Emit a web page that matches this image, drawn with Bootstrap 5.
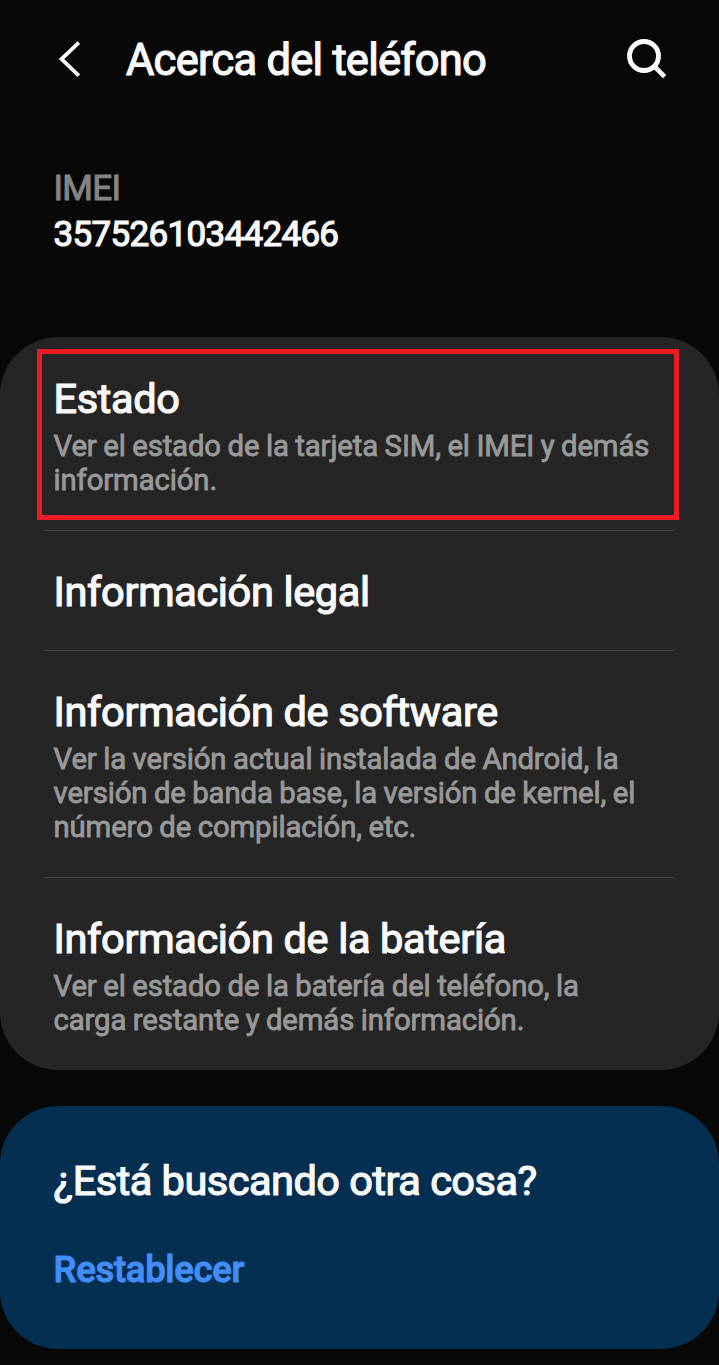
<!DOCTYPE html>
<html lang="es">
<head>
<meta charset="utf-8">
<meta name="viewport" content="width=device-width, initial-scale=1">
<title>Acerca del teléfono</title>
<link rel="stylesheet" href="https://cdn.jsdelivr.net/npm/bootstrap@5.3.0/dist/css/bootstrap.min.css">
<style>
body{background:#080808;color:#fafafa;font-family:Roboto,sans-serif;height:1365px;overflow:hidden}
.topbar{height:120px;padding:0 52px 0 57px}
.topbar h1{font-size:43.5px;line-height:50px;font-weight:400;margin-left:44px;padding-top:2px;-webkit-text-stroke:1.2px;letter-spacing:-.76px}
.imei{height:217px;padding:46px 52.5px 0 53.5px;font-size:35px;line-height:46px;letter-spacing:-.68px}
.imei dt{font-weight:400;color:#858585;-webkit-text-stroke:1px}
.imei dd{-webkit-text-stroke:1.2px}
.panel{border-radius:58px;background:#252525;height:733px;padding:12px 40px 0 37px}
.entry{padding:37px 16px 0 16.5px}
.entry h2,.help h2{font-size:41.5px;line-height:48px;font-weight:400;margin:0;letter-spacing:-.34px;-webkit-text-stroke:1.2px}
.entry p{font-size:29.3px;line-height:34px;color:#999;margin:6px 0 0;letter-spacing:-.11px;word-spacing:-.6px;white-space:nowrap;-webkit-text-stroke:.85px}
.marked{border:5px solid #ed1c24;height:171px;padding:21px 11px 0 11.5px;margin-bottom:10px}
.legal{height:119px}
.software{height:226px}
.rule{height:1px;background:#414141;margin:0 5px 0 7px}
.help{height:243px;margin-top:36px;border-radius:58px;background:#052f51;padding:51px 53px 0 53.5px}
.help h2{letter-spacing:-.5px}
.help a{display:block;margin-top:43px;font-size:36.5px;line-height:44px;letter-spacing:-.3px;color:#438dfb;font-weight:500;-webkit-text-stroke:1px}
</style>
</head>
<body>
<header class="topbar d-flex align-items-center">
<svg width="25" height="40" viewBox="0 0 25 40" fill="none" stroke="#fafafa" stroke-width="3.8"><path d="M21.8 2.6 4.5 19l17.3 16.6"/></svg>
<h1 class="mb-0 text-nowrap">Acerca del teléfono</h1>
<svg class="ms-auto" width="42" height="42" viewBox="0 0 42 42" fill="none" stroke="#fafafa" stroke-width="4.9"><circle cx="19" cy="17" r="14.5"/><path d="m29 27 10.6 10.6" stroke-width="4.6"/></svg>
</header>
<dl class="imei mb-0"><dt>IMEI</dt><dd class="mb-0">357526103442466</dd></dl>
<main>
<section class="panel">
<div class="entry marked"><h2>Estado</h2><p>Ver el estado de la tarjeta SIM, el IMEI y demás<br>información.</p></div>
<div class="rule"></div>
<div class="entry legal"><h2>Información legal</h2></div>
<div class="rule"></div>
<div class="entry software"><h2>Información de software</h2><p>Ver la versión actual instalada de Android, la<br>versión de banda base, la versión de kernel, el<br>número de compilación, etc.</p></div>
<div class="rule"></div>
<div class="entry"><h2>Información de la batería</h2><p>Ver el estado de la batería del teléfono, la<br>carga restante y demás información.</p></div>
</section>
<section class="help"><h2>¿Está buscando otra cosa?</h2><a class="text-decoration-none" href="#">Restablecer</a></section>
</main>
<script src="https://cdn.jsdelivr.net/npm/bootstrap@5.3.0/dist/js/bootstrap.bundle.min.js"></script>
</body>
</html>
